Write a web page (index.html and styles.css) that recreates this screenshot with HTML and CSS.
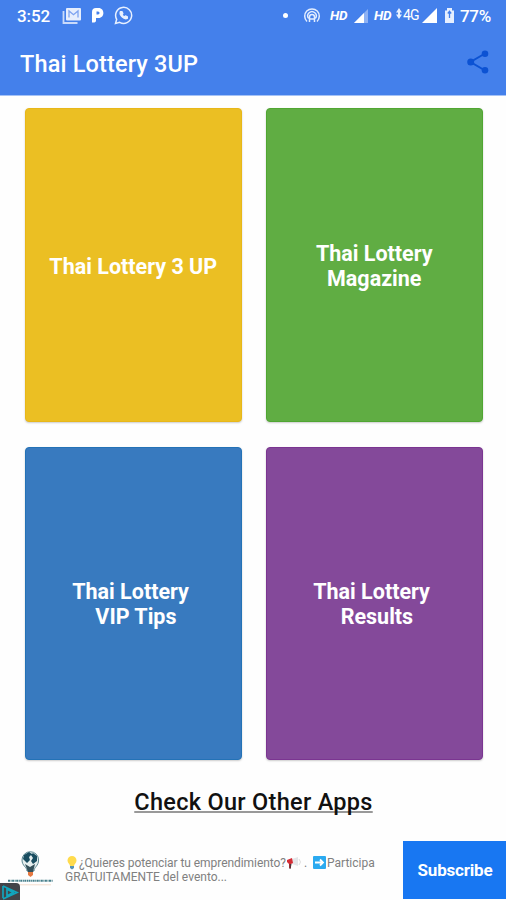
FILE: index.html
```html
<!DOCTYPE html>
<html lang="en">
<head>
<meta charset="utf-8">
<title>Thai Lottery 3UP</title>
<link rel="stylesheet" href="styles.css">
</head>
<body>
<header class="header">
  <div class="status">
    <span class="time">3:52</span>
    <svg class="mail" width="20" height="18" viewBox="0 0 20 18"><path d="M1.500 4v12h14" fill="none" stroke="#c9dafa" stroke-width="1.800"/><rect x="4" y="1" width="15" height="12.500" rx="1" fill="#e6eefd"/><path d="M7 10.500V4l4.500 3.700L16 4v6.500" fill="none" stroke="#7da3f0" stroke-width="1.300"/></svg>
    <svg class="pay" width="13" height="17" viewBox="0 0 13 17"><path fill="#fff" fill-rule="evenodd" d="M1 5Q1 1 5 1h2.500C14 1 14 11 7.500 11H5v2.500Q5 16 1 15.500ZM5.500 4.500v3h1.500c2 0 2-3 0-3Z"/></svg>
    <svg class="chat" width="19" height="19" viewBox="0 0 19 19" fill="none" stroke="#e8f0ff"><path stroke-width="1.500" d="M1.500 17.500 2.700 13.300A8 8 0 1 1 5.700 16.300Z"/><path stroke-width="1.300" fill="#e8f0ff" stroke-linejoin="round" d="M6.300 5.700c-1.200 3.300 3.500 8.200 7 6.700l.1-1.500-2-1-1 1c-1.100-.5-2-1.300-2.400-2.400l.9-1-.9-1.900Z"/></svg>
    <span class="dot"></span>
    <svg class="cast" width="18" height="18" viewBox="0 0 18 18" fill="none" stroke="#e3edff" stroke-width="1.500"><path d="M4 14.500a7.300 7.300 0 1 1 10 0M5.700 11.500a4.200 4.200 0 1 1 6.600 0"/><path d="M6.500 15V10a2.500 2.500 0 0 1 5 0v5M6.500 12h5"/></svg>
    <span class="hd">HD</span>
    <svg class="signal weak" width="14" height="14" viewBox="0 0 14 14"><path d="M0 14 14 0V14Z" fill="#8db1f4"/><path d="M0 14 10 4V14Z" fill="#fff"/></svg>
    <span class="hd second">HD</span>
    <svg class="updown" width="6" height="12" viewBox="0 0 6 12"><path d="M3 0 6 4.500H4v2h2L3 11 0 6.500h2v-2H0Z" fill="#e8f0ff"/></svg>
    <span class="net">4G</span>
    <svg class="signal full" width="15" height="15" viewBox="0 0 15 15"><path d="M0 15 15 0V15Z" fill="#fff"/></svg>
    <svg class="battery" width="9" height="15" viewBox="0 0 9 15"><path d="M0 2.500h2V0h5v2.500h2V15H0Z" fill="#e6efff"/><path d="M4.500 3v7M2.800 5.500 4.500 3.300l1.700 2.200" fill="none" stroke="#4480eb" stroke-width="1.300"/></svg>
    <span class="percent">77%</span>
  </div>
  <div class="toolbar">
    <h1 class="title">Thai Lottery 3UP</h1>
    <svg class="share" width="22" height="24" viewBox="0 0 22 24" fill="#0c52d3"><path d="M18 3.500 3.500 12 18 20.500" fill="none" stroke="#0c52d3" stroke-width="2"/><circle cx="18" cy="3.700" r="3.300"/><circle cx="3.700" cy="12" r="3.500"/><circle cx="18" cy="20.200" r="3.300"/></svg>
  </div>
</header>
<main class="cards">
  <a class="card yellow"><span>Thai Lottery 3 UP</span></a>
  <a class="card green"><span>Thai Lottery<br>Magazine</span></a>
  <a class="card blue"><span>Thai Lottery&nbsp;<br>&nbsp;VIP Tips</span></a>
  <a class="card purple"><span>Thai Lottery&nbsp;<br>&nbsp;Results</span></a>
</main>
<div class="more"><a class="more-link">Check Our Other Apps</a></div>
<footer class="ad">
  <svg class="brand" width="60" height="60" viewBox="0 0 60 60"><path d="M27 31c0-4-5-5-5-11a8.300 8.300 0 0 1 16.600 0c0 6-4.600 7-4.600 11Z" fill="#e5eeee" stroke="#5b8791" stroke-width="1"/><path d="M24 15l5-3 3 2-3 3 1 3-3 3-4-4ZM33 13l4 3v5l-4 3-2-3 2-3-2-3Z" fill="#194d60"/><path d="M25 24l5 3 5-3-2 8h-5Z" fill="#34515b"/><path d="M28 32h5v3l-2.500 2-2.500-2Z" fill="#e67942"/><path d="M8 40.800h45" stroke="#437d89" stroke-width="2" stroke-dasharray="2 .6 1 .5"/><path d="M15 44.800h36" stroke="#f4ddce"/><path d="M0 43h16q4 0 4 4v13H0Z" fill="#434449"/><path d="M3 46v12M3 46l14 6.500L3 59M7 49v7l6-3.500Z" fill="none" stroke="#12a5bd" stroke-width="1.700"/></svg>
  <p class="copy">
    <span class="line first"><svg class="bulb" width="14" height="14" viewBox="0 0 14 14"><path d="M5 10C5 8 2.500 7 2.500 4.500a4.500 4.500 0 0 1 9 0C11.500 7 9 8 9 10Z" fill="#ffdb4d"/><path d="M5 10h4v2L7 13.500 5 12Z" fill="#5792b5"/></svg><span class="question">¿Quieres potenciar tu emprendimiento?</span><svg class="horn" width="16" height="14" viewBox="0 0 16 14"><path d="M6 3l6-2v9L6 8Z" fill="#e4e5e8"/><path d="M1 4l5-2 1 5-2 1v4H3V8L1 6Z" fill="#d52d36"/><path d="M3.500 8h2l-1 5h-1Z" fill="#51343a"/><path d="M13 3q3 3 0 6" fill="none" stroke="#ddd"/></svg><span class="period">.</span><svg class="arrow" width="13" height="13" viewBox="0 0 13 13"><rect width="13" height="13" rx="1" fill="#2baaf0"/><path d="M2 6.500h8M7 3.500l3 3-3 3" fill="none" stroke="#fff" stroke-width="1.800"/></svg><span class="join">Participa</span></span>
    <span class="line second-line">GRATUITAMENTE del evento...</span>
  </p>
  <a class="subscribe">Subscribe</a>
</footer>
</body>
</html>
```
FILE: styles.css
```css
* { box-sizing: border-box; }
body { margin: 0; width: 506px; height: 900px; overflow: hidden; background: #fefefe; font-family: Roboto, sans-serif; }
svg { display: block; flex: none; }
.header { height: 96px; background: #4480eb; color: #fff; border-bottom: 1px solid #a5c2f6; }
.status { display: flex; height: 31px; align-items: center; padding-left: 17px; white-space: nowrap; }
.status > * { flex: none; }
.time { width: 45px; font-size: 17px; font-weight: 500; letter-spacing: -.1px; }
.pay { margin-left: 9px; }
.chat { margin-left: 10px; }
.dot { width: 5px; height: 5px; margin-left: 150px; border-radius: 50%; background: #fff; }
.cast { margin-left: 15px; }
.hd { width: 18px; margin: -1px 0 0 9px; font-size: 13.5px; font-weight: 700; font-style: italic; letter-spacing: -.3px; }
.weak { margin-left: 6px; }
.hd.second { margin-left: 6px; }
.updown { margin: -4px 0 0 4px; }
.net { width: 17px; margin: -2px 0 0 1px; font-size: 14px; letter-spacing: -.8px; }
.full { margin-left: 2px; }
.battery { margin-left: 8px; }
.percent { margin-left: 6px; font-size: 17px; font-weight: 500; letter-spacing: -.3px; }
.toolbar { display: flex; height: 64px; align-items: center; justify-content: space-between; padding: 1px 17px 0 20px; }
.title { margin: 0; font-size: 23.5px; font-weight: 500; letter-spacing: .15px; }
.share { margin-top: -3px; }
.cards { display: grid; grid-template-columns: 216.500px 216.500px; grid-template-rows: 314px 313px; gap: 25px 24.500px; padding: 12px 0 0 25px; }
.card { display: flex; align-items: center; justify-content: center; padding-top: 2px; border: 1px solid; border-radius: 4px; box-shadow: 0 1px 2px #0003; text-align: center; font-size: 21.5px; font-weight: 700; line-height: 25px; }
.blue, .purple { padding-top: 0; }
.card span { color: #fff; }
.yellow { background: #ebbf23; border-color: #e8b719; }
.green { background: #60ad43; border-color: #50a632; }
.blue { background: #387abf; border-color: #2472b6; }
.purple { background: #84499a; border-color: #7b3591; }
.more { display: flex; height: 80px; align-items: center; justify-content: center; padding: 5px 0 0 1px; }
.more-link { color: #111; font-size: 23.5px; font-weight: 500; line-height: 25px; letter-spacing: .3px; text-decoration: underline 2px #999; text-decoration-skip-ink: none; text-underline-offset: 1px; }
.ad { display: flex; height: 60px; background: #fefefe; }
.copy { width: 343px; margin: 0; padding: 16px 0 0 5px; color: #808080; font-size: 12px; line-height: 14px; }
.line { display: flex; height: 14px; white-space: nowrap; }
.question { width: 207px; letter-spacing: -.06px; }
.period { width: 11px; padding-left: 2px; }
.join { margin-left: 1px; }
.subscribe { display: flex; width: 103px; height: 58px; margin-top: 1px; padding-left: 1px; align-items: center; justify-content: center; background: #1877f2; color: #fff; font-size: 17px; font-weight: 700; letter-spacing: -.2px; }
```
